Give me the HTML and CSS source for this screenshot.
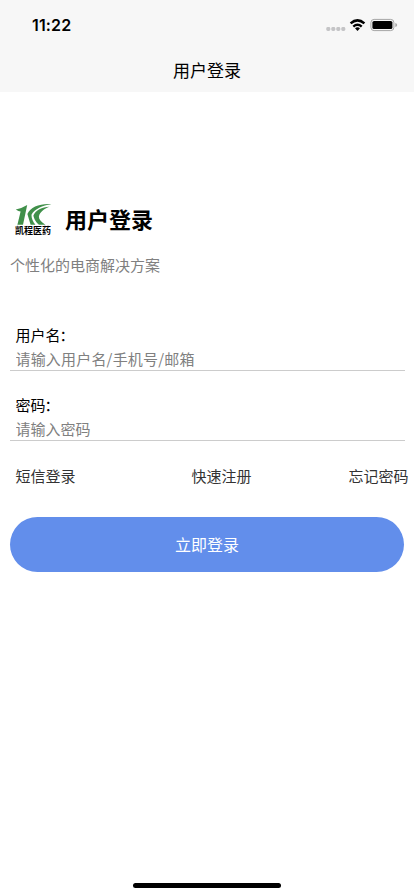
FILE: index.html
```html
<!DOCTYPE html>
<html lang="zh-CN">
<head>
<meta charset="utf-8">
<title>用户登录</title>
<link rel="stylesheet" href="styles.css">
</head>
<body>
<header class="top">
  <div class="status">
    <span class="time">11:22</span>
    <svg class="indicators" width="72" height="16" viewBox="0 0 72 16">
      <g fill="#c4c4c6"><rect x="0.3" y="10" width="4" height="4" rx="1.4"/><rect x="5.3" y="10" width="4" height="4" rx="1.4"/><rect x="10.3" y="10" width="4" height="4" rx="1.4"/><rect x="15.3" y="10" width="4" height="4" rx="1.4"/></g>
      <g fill="none" stroke="#000" stroke-width="2.5"><path d="M24.6 6.4Q31.5 0.3 38.4 6.4"/><path d="M27.3 9.6Q31.5 6 35.7 9.6"/></g>
      <path d="M29 11.2Q31.5 9.5 34 11.2L31.5 13.9Z"/>
      <rect x="44.9" y="2.4" width="23" height="11.2" rx="3.2" fill="none" stroke="#a5a5a5"/>
      <rect x="46.4" y="3.9" width="20" height="8.2" rx="1.7"/>
      <path d="M69.3 6Q71.2 6.5 71.2 8T69.3 10Z" fill="#a5a5a5"/>
    </svg>
  </div>
  <div class="nav-title">用户登录</div>
</header>
<main class="page">
  <div class="brand">
    <div class="logo">
      <svg width="38" height="22" viewBox="0 0 38 22" fill="#40904a">
        <path d="M0.8 5.6Q7 4.2 12.2 1L8 20.8H2.4L5.6 7.6Q3.5 7.6 0.8 5.6Z"/>
        <path d="M36.3 0.2C25 -0.6 15.5 3 12.4 10L15.6 20.8H20.4C17.6 17 16.2 13.6 16.6 10.6C19.5 4.8 27.5 1.4 36.3 0.2Z"/>
        <path d="M34.5 2.8C27 3.2 20.4 6.4 18.4 11.6C18.8 15 21.6 19 24 20.8H30.4C26.4 18 23.8 15.4 23.9 12.4C25 8 29 4.8 34.5 2.8Z"/>
      </svg>
      <span class="logo-name">凯程医药</span>
    </div>
    <h1>用户登录</h1>
  </div>
  <p class="slogan">个性化的电商解决方案</p>
  <form class="form">
    <div class="field">
      <label for="user">用户名<span class="colon">：</span></label>
      <input id="user" type="text" placeholder="请输入用户名/手机号/邮箱">
    </div>
    <div class="field">
      <label for="pass">密码<span class="colon">：</span></label>
      <input id="pass" type="password" placeholder="请输入密码">
    </div>
    <div class="links"><a>短信登录</a><a class="register">快速注册</a><a>忘记密码</a></div>
    <button class="submit" type="button">立即登录</button>
  </form>
</main>
<div class="home-bar"></div>
</body>
</html>
```

FILE: styles.css
```css
* { box-sizing: border-box; }
body {
  margin: 0;
  height: 896px;
  display: flex;
  flex-direction: column;
  overflow: hidden;
  background: #fff;
  color: #000;
  font-family: "Noto Sans CJK SC", sans-serif;
}
.top { height: 92px; background: #f7f7f7; }
.status {
  height: 48px;
  padding: 2px 16.5px 0 32px;
  display: flex;
  align-items: center;
  justify-content: space-between;
}
.time { font: 600 16px/20px Inter, sans-serif; letter-spacing: 0.15px; }
.indicators { display: block; }
.nav-title { text-align: center; font-size: 17px; line-height: 44px; }
.page { flex: 1; padding-top: 112px; }
.brand { display: flex; height: 34px; padding-left: 15px; }
.logo { width: 50px; display: flex; flex-direction: column; }
.logo svg { display: block; }
.logo-name { font-size: 9px; font-weight: 700; line-height: 9px; white-space: nowrap; }
h1 { margin: 0; font-size: 22px; font-weight: 700; line-height: 28px; }
.slogan { margin: 16px 0 0 10px; font-size: 15px; line-height: 22px; color: #808080; }
.form { padding: 46px 0 0 10px; }
.field {
  height: 49px;
  margin: 0 9px 21px 0;
  padding-left: 5.5px;
  border-bottom: 1px solid #ccc;
  display: flex;
  flex-direction: column;
  font-size: 15px;
}
.field label { line-height: 26px; height: 26px; }
.colon { margin-left: -1px; }
.field input {
  height: 22px;
  padding: 0;
  border: 0;
  outline: 0;
  background: transparent;
  font: 15px/22px "Noto Sans CJK SC", sans-serif;
  letter-spacing: 0.18px;
}
#pass { letter-spacing: 0; }
.field input::placeholder { color: #808080; opacity: 1; }
.links {
  display: flex;
  justify-content: space-between;
  padding: 2px 5.5px 0 5.5px;
  font-size: 15px;
  line-height: 24px;
  color: #333;
}
.register { margin-left: 19px; }
.submit {
  display: block;
  width: 394px;
  height: 55px;
  margin-top: 29px;
  padding: 0 0 1px;
  border: 0;
  border-radius: 28px;
  background: #628eeb;
  color: #fff;
  font: 16px/24px "Noto Sans CJK SC", sans-serif;
}
.home-bar {
  width: 148px;
  height: 5px;
  margin: 0 auto 8px;
  border-radius: 3px;
  background: #000;
}
```
